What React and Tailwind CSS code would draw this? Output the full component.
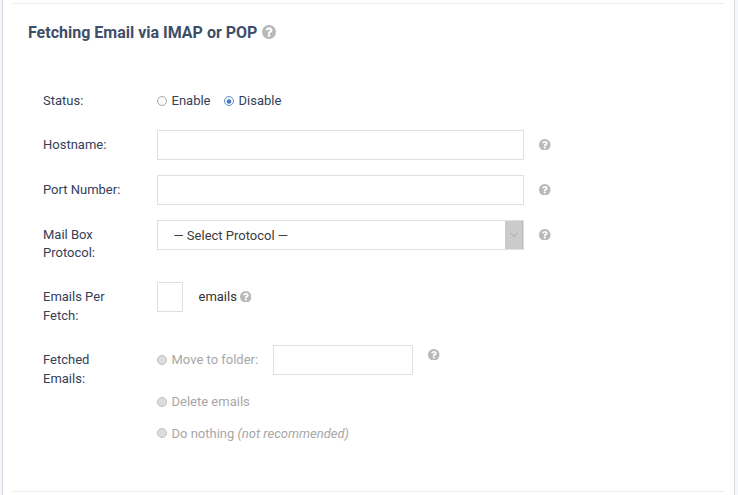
import { useState } from "react"

function HelpIcon({ className = "mb-px size-[11.500px]" }) {
  return (
    <svg viewBox="0 0 1536 1536" className={`shrink-0 fill-[#b9b9b9] ${className}`}>
      <path d="M896 1248v-192q0-14-9-23t-23-9h-192q-14 0-23 9t-9 23v192q0 14 9 23t23 9h192q14 0 23-9t9-23zm256-672q0-88-55.500-163t-138.500-116-170-41q-243 0-371 213-15 24 8 42l132 100q7 6 19 6 16 0 25-12 53-68 86-92 34-24 86-24 48 0 85.500 26t37.500 59q0 38-20 61t-68 45q-63 28-115.500 86.500t-52.500 125.500v36q0 14 9 23t23 9h192q14 0 23-9t9-23q0-19 21.500-49.500t54.500-49.500q32-18 49-28.500t46-35 44.500-48 28-60.500 12.500-81zm384 192q0 209-103 385.500t-279.500 279.500-385.500 103-385.500-103-279.500-279.500-103-385.500 103-385.500 279.500-279.500 385.500-103 385.500 103 279.500 279.500 103 385.500z" />
    </svg>
  )
}

function Radio({ label, note, checked, disabled, onSelect, dotClass = "mt-[5px]" }) {
  return (
    <button
      type="button"
      role="radio"
      aria-checked={!!checked}
      disabled={disabled}
      onClick={onSelect}
      className={`flex h-[19px] items-start gap-[4.500px] whitespace-nowrap ${disabled ? "text-[#a7a7a7]" : ""}`}
    >
      <svg viewBox="0 0 10 10" className={`size-2.5 shrink-0 ${dotClass}`}>
        <circle
          cx="5"
          cy="5"
          r="4.5"
          fill={disabled ? "#dcdcdc" : "#f9f9f9"}
          stroke={checked ? "#5c8fce" : disabled ? "#bdbdbd" : "#a9a9a9"}
        />
        {checked && <circle cx="5" cy="5.5" r="2.2" fill="#3f79c0" />}
      </svg>
      <span className="mt-px">
        {label}
        {note && <i> {note}</i>}
      </span>
    </button>
  )
}

function Row({ label, className = "", children }) {
  return (
    <div className={`grid grid-cols-[114px_1fr] items-start ${className}`}>
      <div className="w-[90px] pt-1.5">{label}</div>
      <div>{children}</div>
    </div>
  )
}

const inputClass = "block h-[30px] border border-[#dbe0e4] bg-white px-2 outline-none"

export default function App() {
  const [status, setStatus] = useState("disable")

  return (
    <div className="h-[495px] w-[738px] bg-[#f3f7fb] pr-[3px] pl-0.5 font-['Roboto',sans-serif] text-[13px] leading-[18.570px] text-[#34405a]">
      <div className="flex h-full flex-col border-x border-[#d5dadf] bg-white pt-[3px] pr-2.5 pl-2.5">
        <div className="h-px bg-[#e9ebec]" />

        {/* HEADER */}

        <h3 className="flex h-[57px] items-center gap-[4.500px] pl-[15px] text-base font-bold text-[#3e4e68]">
          Fetching Email via IMAP or POP
          <HelpIcon className="mb-px size-3.5" />
        </h3>

        {/* FORM */}

        <div className="flex flex-col pt-[25px] pl-[30px]">
          <Row label="Status:" className="h-11">
            <div className="flex gap-[13.500px] pt-[5px]" role="radiogroup">
              <Radio label="Enable" checked={status === "enable"} onSelect={() => setStatus("enable")} />
              <Radio label="Disable" checked={status === "disable"} onSelect={() => setStatus("disable")} />
            </div>
          </Row>

          <Row label="Hostname:" className="h-[45px]">
            <div className="flex h-[30px] items-center gap-[15px]">
              <input className={`${inputClass} w-[367px]`} />
              <HelpIcon />
            </div>
          </Row>

          <Row label="Port Number:" className="h-[45px]">
            <div className="flex h-[30px] items-center gap-[15px]">
              <input className={`${inputClass} w-[367px]`} />
              <HelpIcon />
            </div>
          </Row>

          <Row label={<>Mail Box<br />Protocol:</>} className="h-[62px] leading-[18px]">
            <div className="flex h-[30px] items-center gap-[15px]">
              <div className="flex h-[30px] w-[367px] items-center justify-between border border-[#dbe0e4] pl-[15.500px] text-[#3c3c3c]">
                <span className="pt-0.5">— Select Protocol —</span>
                <span className="flex h-full w-[18px] items-center justify-center border-r border-[#bcbcbc] bg-[#cbcbcb]">
                  <svg viewBox="0 0 8 5" className="size-2 fill-none stroke-[#a5a5a5]">
                    <path d="M.5 .5 4 4 7.500 .5" />
                  </svg>
                </span>
              </div>
              <HelpIcon />
            </div>
          </Row>

          <Row label={<>Emails Per<br />Fetch:</>} className="h-[63px]">
            <div className="flex h-[30px] items-center text-[#333]">
              <input className={`${inputClass} mr-[15.500px] w-[26px]`} />
              <span className="mr-[3px]">emails</span>
              <HelpIcon />
            </div>
          </Row>

          <Row label={<>Fetched<br />Emails:</>}>
            <div className="flex h-[30px] items-start">
              <div className="pt-[5px]">
                <Radio label="Move to folder:" disabled />
              </div>
              <input className={`${inputClass} mr-[15px] ml-[15px] w-[140px]`} />
              <HelpIcon className="mt-[3.500px] size-[11.500px]" />
            </div>
            <div className="flex flex-col gap-[13px] pt-[17px]">
              <Radio label="Delete emails" disabled />
              <Radio label="Do nothing" note="(not recommended)" disabled dotClass="mt-1" />
            </div>
          </Row>
        </div>

        <div className="mt-auto mb-[3px] h-px bg-[#e9ebec]" />
      </div>
    </div>
  )
}
